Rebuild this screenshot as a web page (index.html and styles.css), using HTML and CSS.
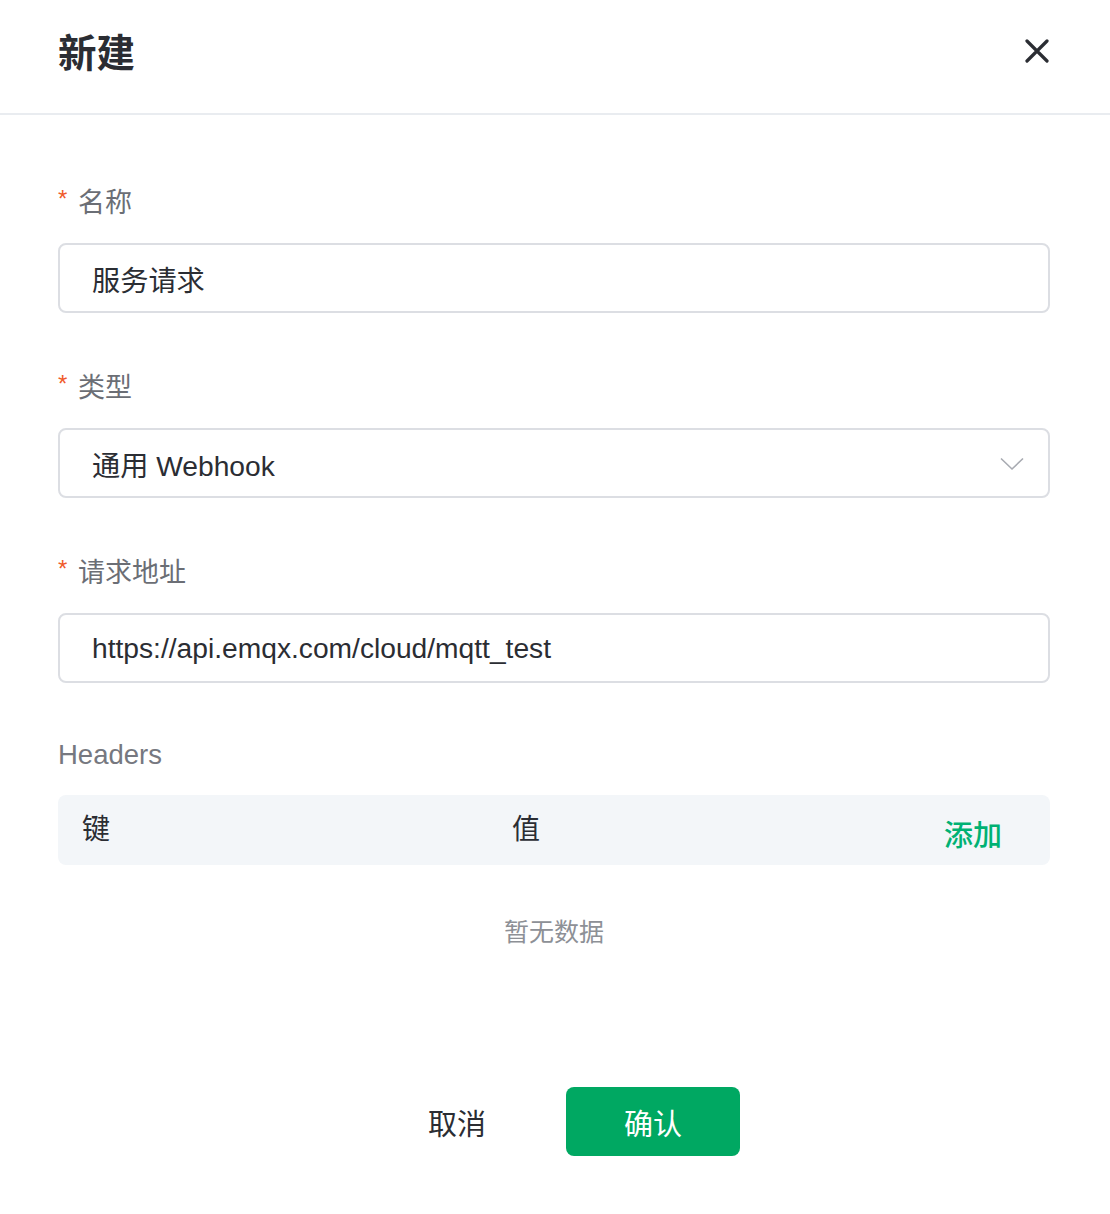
FILE: index.html
```html
<!DOCTYPE html>
<html lang="zh-CN">
<head>
<meta charset="utf-8">
<title>新建</title>
<link rel="stylesheet" href="styles.css">
</head>
<body>
<div class="dialog">
  <div class="dialog-header">
    <h1 class="dialog-title">新建</h1>
    <button class="close-btn" aria-label="关闭">
      <svg width="24" height="24" viewBox="0 0 24 24"><path d="M2 2 L22 22 M22 2 L2 22" stroke="#2b2d33" stroke-width="3.2" stroke-linecap="round" fill="none"/></svg>
    </button>
  </div>
  <div class="dialog-body">
    <div class="form-item">
      <label class="form-label"><span class="req">*</span>名称</label>
      <div class="input">服务请求</div>
    </div>
    <div class="form-item">
      <label class="form-label"><span class="req">*</span>类型</label>
      <div class="input select">
        <span>通用 Webhook</span>
        <svg class="chevron" width="24" height="14" viewBox="0 0 24 14"><path d="M1 1.5 L12 12 L23 1.5" stroke="#a8abb2" stroke-width="1.6" fill="none"/></svg>
      </div>
    </div>
    <div class="form-item">
      <label class="form-label"><span class="req">*</span>请求地址</label>
      <div class="input">https://api.emqx.com/cloud/mqtt_test</div>
    </div>
    <div class="headers">
      <div class="form-label plain">Headers</div>
      <div class="table-head">
        <div class="cell">键</div>
        <div class="cell">值</div>
        <div class="cell add">添加</div>
      </div>
      <div class="empty">暂无数据</div>
    </div>
  </div>
  <div class="dialog-footer">
    <button class="btn btn-text">取消</button>
    <button class="btn btn-primary">确认</button>
  </div>
</div>
</body>
</html>
```

FILE: styles.css
```css
* { box-sizing: border-box; }
html, body {
  margin: 0;
  padding: 0;
  background: #ffffff;
  font-family: "Liberation Sans", "Noto Sans CJK SC", sans-serif;
  color: #2b2d33;
}
.dialog {
  width: 1110px;
  min-height: 1214px;
}
.dialog-header {
  height: 115px;
  display: flex;
  align-items: center;
  justify-content: space-between;
  padding: 0 60px 12px 58px;
  border-bottom: 2px solid #e9ecf0;
}
.dialog-title {
  margin: 0;
  font-family: "Noto Sans CJK SC", sans-serif;
  font-size: 38.5px;
  font-weight: 700;
  color: #2b2d33;
  line-height: 1;
}
.close-btn {
  border: 0;
  background: none;
  padding: 0;
  width: 24px;
  height: 24px;
  margin-right: 1px;
  display: flex;
}
.dialog-body {
  padding: 65px 60px 0 58px;
}
.form-item {
  margin-bottom: 52px;
}
.form-label {
  display: flex;
  align-items: center;
  height: 40px;
  font-family: "Noto Sans CJK SC", sans-serif;
  font-size: 27px;
  color: #6b6e75;
  margin-bottom: 23px;
}
.form-label.plain {
  font-family: "Liberation Sans", "Noto Sans CJK SC", sans-serif;
  font-size: 27.5px;
  color: #767880;
  margin-top: 3px;
  margin-bottom: 20px;
}
.req {
  color: #f05a2b;
  font-family: "Liberation Sans", sans-serif;
  font-size: 24px;
  width: 20px;
  margin-top: -2px;
}
.input {
  height: 70px;
  border: 2px solid #dcdee3;
  border-radius: 8px;
  padding: 0 32px;
  display: flex;
  align-items: center;
  font-size: 28.2px;
  color: #2b2d33;
}
.select {
  justify-content: space-between;
  padding-right: 24px;
}
.chevron { margin-top: 2px; }
.table-head {
  height: 70px;
  background: #f3f6f9;
  border-radius: 8px;
  display: grid;
  grid-template-columns: 430px 1fr 130px;
  align-items: center;
}
.cell {
  padding-left: 24px;
  font-family: "Noto Sans CJK SC", sans-serif;
  font-size: 28px;
  color: #2b2d33;
  margin-top: -6px;
}
.cell.add {
  color: #00b173;
  font-size: 29px;
  font-weight: 500;
  margin-top: 6px;
}
.empty {
  height: 130px;
  display: flex;
  align-items: center;
  justify-content: center;
  font-family: "Noto Sans CJK SC", sans-serif;
  font-size: 25px;
  color: #8d9096;
}
.dialog-footer {
  display: flex;
  justify-content: center;
  gap: 22px;
  margin-top: 92px;
  padding-left: 0;
}
.btn {
  width: 174px;
  height: 69px;
  border: 0;
  border-radius: 8px;
  font-family: "Noto Sans CJK SC", sans-serif;
  font-size: 29px;
  cursor: pointer;
}
.btn-text {
  background: none;
  color: #2b2d33;
}
.btn-primary {
  background: #00a862;
  color: #ffffff;
}
```
